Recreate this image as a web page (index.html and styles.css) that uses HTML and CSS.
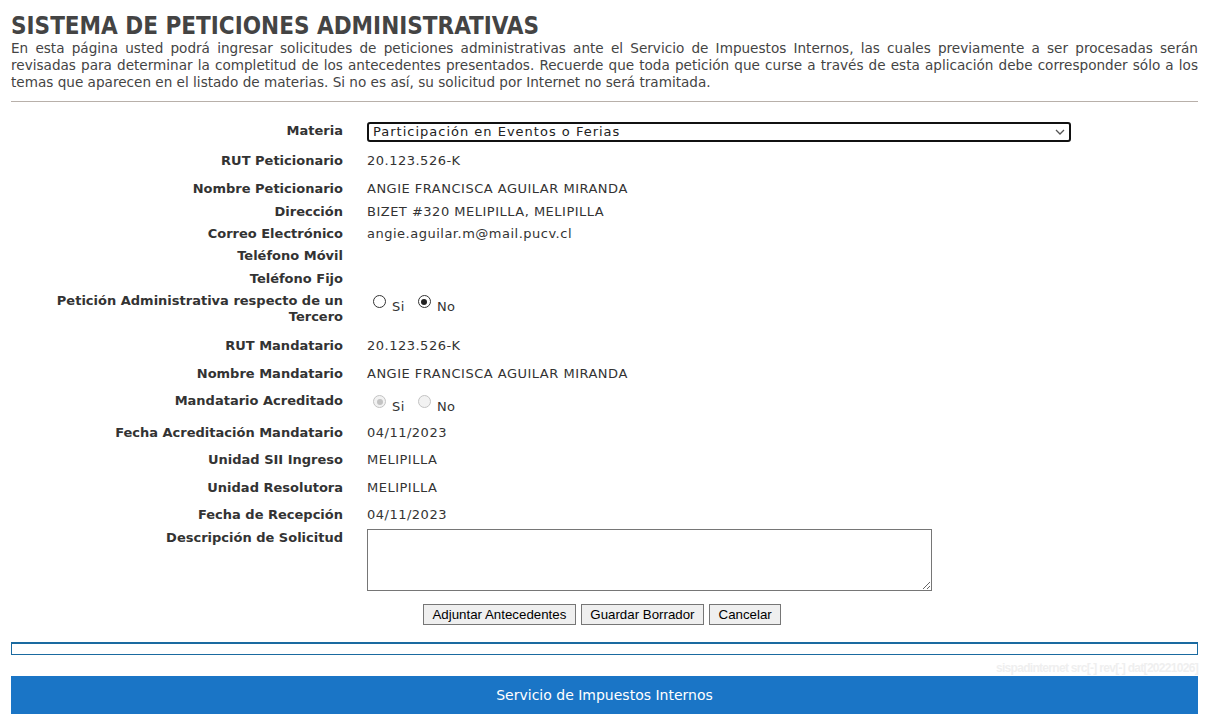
FILE: index.html
```html
<!DOCTYPE html>
<html lang="es">
<head>
<meta charset="utf-8">
<title>Sistema de Peticiones Administrativas</title>
<link rel="stylesheet" href="styles.css">
</head>
<body>
<div class="page">
  <h1 class="title">SISTEMA DE PETICIONES ADMINISTRATIVAS</h1>
  <p class="intro">En esta página usted podrá ingresar solicitudes de peticiones administrativas ante el Servicio de Impuestos Internos, las cuales previamente a ser procesadas serán revisadas para determinar la completitud de los antecedentes presentados. Recuerde que toda petición que curse a través de esta aplicación debe corresponder sólo a los temas que aparecen en el listado de materias. Si no es así, su solicitud por Internet no será tramitada.</p>
  <hr class="sep">

  <table class="form">
    <tr class="r-materia">
      <th>Materia</th>
      <td><div class="select"><span>Participación en Eventos o Ferias</span><svg class="chev" width="10" height="6" viewBox="0 0 10 6"><path d="M1 1l4 4 4-4" fill="none" stroke="#555" stroke-width="1.3"/></svg></div></td>
    </tr>
    <tr class="r-tall"><th>RUT Peticionario</th><td>20.123.526-K</td></tr>
    <tr class="r-tall r-nomp"><th>Nombre Peticionario</th><td>ANGIE FRANCISCA AGUILAR MIRANDA</td></tr>
    <tr><th>Dirección</th><td>BIZET #320 MELIPILLA, MELIPILLA</td></tr>
    <tr><th>Correo Electrónico</th><td>angie.aguilar.m@mail.pucv.cl</td></tr>
    <tr class="r-movil"><th>Teléfono Móvil</th><td></td></tr>
    <tr><th>Teléfono Fijo</th><td></td></tr>
    <tr class="r-radio">
      <th>Petición Administrativa respecto de un Tercero</th>
      <td><span class="radio"></span><span class="rl">Si</span><span class="radio on"></span><span class="rl">No</span></td>
    </tr>
    <tr class="r-tall"><th>RUT Mandatario</th><td>20.123.526-K</td></tr>
    <tr class="r-tall"><th>Nombre Mandatario</th><td>ANGIE FRANCISCA AGUILAR MIRANDA</td></tr>
    <tr class="r-radio2">
      <th>Mandatario Acreditado</th>
      <td><span class="radio dis on"></span><span class="rl">Si</span><span class="radio dis"></span><span class="rl">No</span></td>
    </tr>
    <tr class="r-tall r-short"><th>Fecha Acreditación Mandatario</th><td>04/11/2023</td></tr>
    <tr class="r-tall"><th>Unidad SII Ingreso</th><td>MELIPILLA</td></tr>
    <tr class="r-tall r-short"><th>Unidad Resolutora</th><td>MELIPILLA</td></tr>
    <tr class="r-tall"><th>Fecha de Recepción</th><td>04/11/2023</td></tr>
    <tr class="r-desc"><th>Descripción de Solicitud</th><td><textarea class="desc"></textarea></td></tr>
  </table>

  <div class="buttons">
    <button class="btn">Adjuntar Antecedentes</button>
    <button class="btn">Guardar Borrador</button>
    <button class="btn">Cancelar</button>
  </div>

  <div class="msgbox"></div>
  <div class="version">sispadinternet src[-] rev[-] dat[20221026]</div>
  <footer class="footer">Servicio de Impuestos Internos</footer>
</div>
</body>
</html>
```

FILE: styles.css
```css
html, body {
  margin: 0;
  padding: 0;
  background: #fff;
}
body {
  font-family: "DejaVu Sans", Verdana, sans-serif;
  color: #333;
}
.page {
  padding: 12px 7px 0 11px;
}
.title {
  margin: 0;
  font-family: "DejaVu Sans Condensed", "DejaVu Sans", sans-serif;
  font-weight: bold;
  font-size: 24px;
  line-height: 28px;
  color: #444;
}
.intro {
  margin: 0;
  font-family: "DejaVu Sans", sans-serif;
  font-size: 13.6px;
  line-height: 17px;
  text-align: justify;
  color: #444;
}
.sep {
  margin: 10px 0 0 0;
  border: 0;
  border-top: 1px solid #b8b0aa;
  height: 0;
}
.form {
  border-collapse: collapse;
  margin-top: 18px;
  font-size: 13px;
}
.form th {
  width: 332px;
  text-align: right;
  font-weight: bold;
  vertical-align: top;
  padding: 0 24px 0 0;
  line-height: 16px;
  color: #333;
}
.form td {
  padding: 0;
  vertical-align: top;
  line-height: 16px;
  color: #333;
  letter-spacing: 0.5px;
}
.form tr > * {
  padding-top: 3px;
  padding-bottom: 3px;
}
.form tr.r-tall > * {
  padding-top: 6px;
  padding-bottom: 6px;
}
.form tr.r-nomp > * {
  padding-bottom: 4px;
}
.form tr.r-movil > * {
  padding-bottom: 4px;
}
.form tr.r-short > * {
  padding-bottom: 5px;
}
.form .r-materia th {
  padding-top: 3px;
}
.form .r-materia td {
  padding-top: 2px;
  padding-bottom: 5px;
}
.select {
  width: 692px;
  height: 16px;
  border: 2px solid #111;
  border-radius: 3px;
  display: flex;
  align-items: center;
  justify-content: space-between;
  padding: 0 4px;
  font-size: 13px;
  letter-spacing: 1px;
  color: #222;
}
.chev {
  display: block;
}
.form .r-radio th {
  padding-top: 3px;
  padding-bottom: 7px;
}
.form .r-radio td {
  padding-top: 5px;
}
.form .r-radio2 th {
  padding-top: 5px;
  padding-bottom: 10px;
}
.form .r-radio2 td {
  padding-top: 7px;
}
.radio {
  display: inline-block;
  box-sizing: border-box;
  width: 13px;
  height: 13px;
  border: 1px solid #333;
  border-radius: 50%;
  margin: 0 6px 0 6px;
  vertical-align: -1px;
  position: relative;
  background: #fff;
}
.radio.on::after {
  content: "";
  position: absolute;
  left: 2.5px;
  top: 2.5px;
  width: 6px;
  height: 6px;
  border-radius: 50%;
  background: #222;
}
.radio.dis {
  border-color: #c3c3c3;
  background: #f2f2f2;
}
.radio.dis.on::after {
  background: #c3c3c3;
}
.rl {
  margin-right: 7px;
  position: relative;
  top: 4px;
}
.form .r-desc th {
  padding-top: 1px;
}
.form .r-desc td {
  padding-top: 0;
}
.desc {
  display: block;
  box-sizing: border-box;
  width: 565px;
  height: 62px;
  border: 1px solid #767676;
  margin: 0;
  resize: both;
}
.buttons {
  display: flex;
  gap: 5px;
  padding-left: 412px;
  margin-top: 10px;
}
.btn {
  font-family: "Liberation Sans", Arial, sans-serif;
  font-size: 13.3px;
  height: 21px;
  padding: 0 8.5px;
  background: #efefef;
  border: 1px solid #767676;
  border-radius: 0;
  color: #000;
}
.msgbox {
  margin-top: 17px;
  height: 10px;
  border: 1px solid #1a6aa0;
  border-top-width: 2px;
}
.version {
  text-align: right;
  font-family: "Liberation Sans", Arial, sans-serif;
  font-size: 12px;
  font-weight: bold;
  color: #efefef;
  line-height: 14px;
  margin-top: 6px;
  letter-spacing: -0.7px;
}
.footer {
  margin-top: 1px;
  height: 38px;
  background: #1a75c6;
  color: #fff;
  display: flex;
  align-items: center;
  justify-content: center;
  font-family: "DejaVu Sans", sans-serif;
  font-size: 14px;
}
```
